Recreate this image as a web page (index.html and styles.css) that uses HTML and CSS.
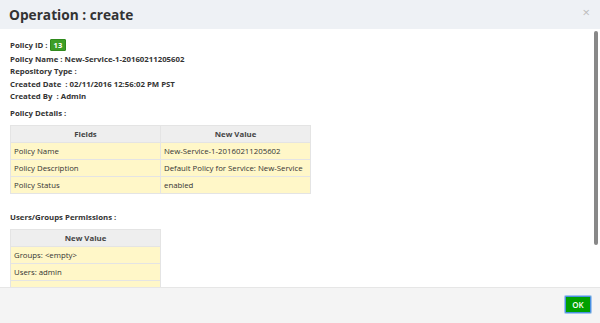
FILE: index.html
```html
<!DOCTYPE html>
<html lang="en">
<head>
    <meta charset="UTF-8">
    <title>Operation : create</title>
    <link rel="stylesheet" href="styles.css">
</head>
<body>
    <div class="modal">
        <div class="modal-header">
            <h3>Operation : create</h3>
            <span class="close">&times;</span>
        </div>

        <div class="modal-body">
            <div class="content">
                <div class="info">
                    <p>Policy ID : <span class="badge">13</span></p>
                    <p>Policy Name : New-Service-1-20160211205602</p>
                    <p>Repository Type : </p>
                    <p>Created Date &nbsp;: 02/11/2016 12:56:02 PM PST</p>
                    <p>Created By &nbsp;: Admin</p>
                </div>

                <h5>Policy Details :</h5>
                <table class="tbl tbl-wide">
                    <thead>
                        <tr><th>Fields</th><th>New Value</th></tr>
                    </thead>
                    <tbody>
                        <tr><td>Policy Name</td><td>New-Service-1-20160211205602</td></tr>
                        <tr><td>Policy Description</td><td>Default Policy for Service: New-Service</td></tr>
                        <tr><td>Policy Status</td><td>enabled</td></tr>
                    </tbody>
                </table>

                <h5 class="gap">Users/Groups Permissions :</h5>
                <table class="tbl tbl-narrow">
                    <thead>
                        <tr><th>New Value</th></tr>
                    </thead>
                    <tbody>
                        <tr><td>Groups: &lt;empty&gt;</td></tr>
                        <tr><td>Users: admin</td></tr>
                        <tr><td>Permissions: read, write, create</td></tr>
                    </tbody>
                </table>
            </div>
            <div class="scrollbar"></div>
        </div>

        <div class="modal-footer">
            <button class="btn-ok">OK</button>
        </div>
    </div>
</body>
</html>
```

FILE: styles.css
```css
* {
    box-sizing: border-box;
}

body {
    margin: 0;
    font-family: "Open Sans", sans-serif;
    color: #333;
    background: #fff;
}

.modal {
    width: 600px;
    height: 323px;
    display: flex;
    flex-direction: column;
    overflow: hidden;
}

.modal-header {
    height: 29px;
    flex: none;
    background: #eef1f5;
    display: flex;
    align-items: center;
    justify-content: space-between;
    padding: 0 10px 0 9px;
}

.modal-header h3 {
    margin: 0 0 1px;
    font-size: 13.7px;
    font-weight: 700;
    color: #333;
}

.close {
    font-size: 13px;
    color: #bbb;
    line-height: 1;
    margin-top: -4px;
}

.modal-body {
    flex: 1;
    position: relative;
    overflow: hidden;
}

.content {
    padding: 9px 10px 0 10px;
    font-size: 7.8px;
}

.info p {
    margin: 0;
    font-weight: 700;
    line-height: 12.4px;
}

.info p:first-child {
    line-height: 15px;
}

.badge {
    display: inline-block;
    background: #3d9e27;
    color: #fff;
    font-size: 7.5px;
    padding: 0 3px;
    line-height: 10px;
    border-radius: 1px;
    border: 1px solid #2f8a1c;
}

h5 {
    margin: 5px 0 7px;
    font-size: 7.8px;
    font-weight: 700;
    line-height: 10px;
}

h5.gap {
    margin-top: 18px;
}

.tbl {
    border-collapse: collapse;
    border: 1px solid #ddd;
}

.tbl-wide {
    width: 301px;
}

.tbl-narrow {
    width: 151px;
}

.tbl th,
.tbl td {
    height: 17px;
    padding: 0 3px;
    border: 1px solid #e4e4e4;
    text-align: left;
    font-weight: 400;
    white-space: nowrap;
}

.tbl th {
    background: #eeeeee;
    text-align: center;
    font-weight: 700;
    color: #444;
}

.tbl td {
    background: #fff7c8;
}

.tbl-wide td:first-child,
.tbl-wide th:first-child {
    width: 150px;
}

.scrollbar {
    position: absolute;
    right: 2px;
    top: 2px;
    width: 4px;
    height: 214px;
    background: #888;
    border-radius: 2px;
}

.modal-footer {
    height: 36px;
    flex: none;
    background: #f4f4f4;
    border-top: 1px solid #e6e6e6;
    display: flex;
    align-items: center;
    justify-content: flex-end;
    padding-right: 9px;
}

.btn-ok {
    font-family: "Open Sans", sans-serif;
    font-size: 8px;
    font-weight: 600;
    color: #fff;
    background: #00a000;
    border: 1px solid #4a90e2;
    box-shadow: 0 0 0 1px rgba(80, 150, 230, 0.5);
    border-radius: 1px;
    width: 26px;
    height: 17px;
    padding: 0;
    margin-top: -3px;
}
```
